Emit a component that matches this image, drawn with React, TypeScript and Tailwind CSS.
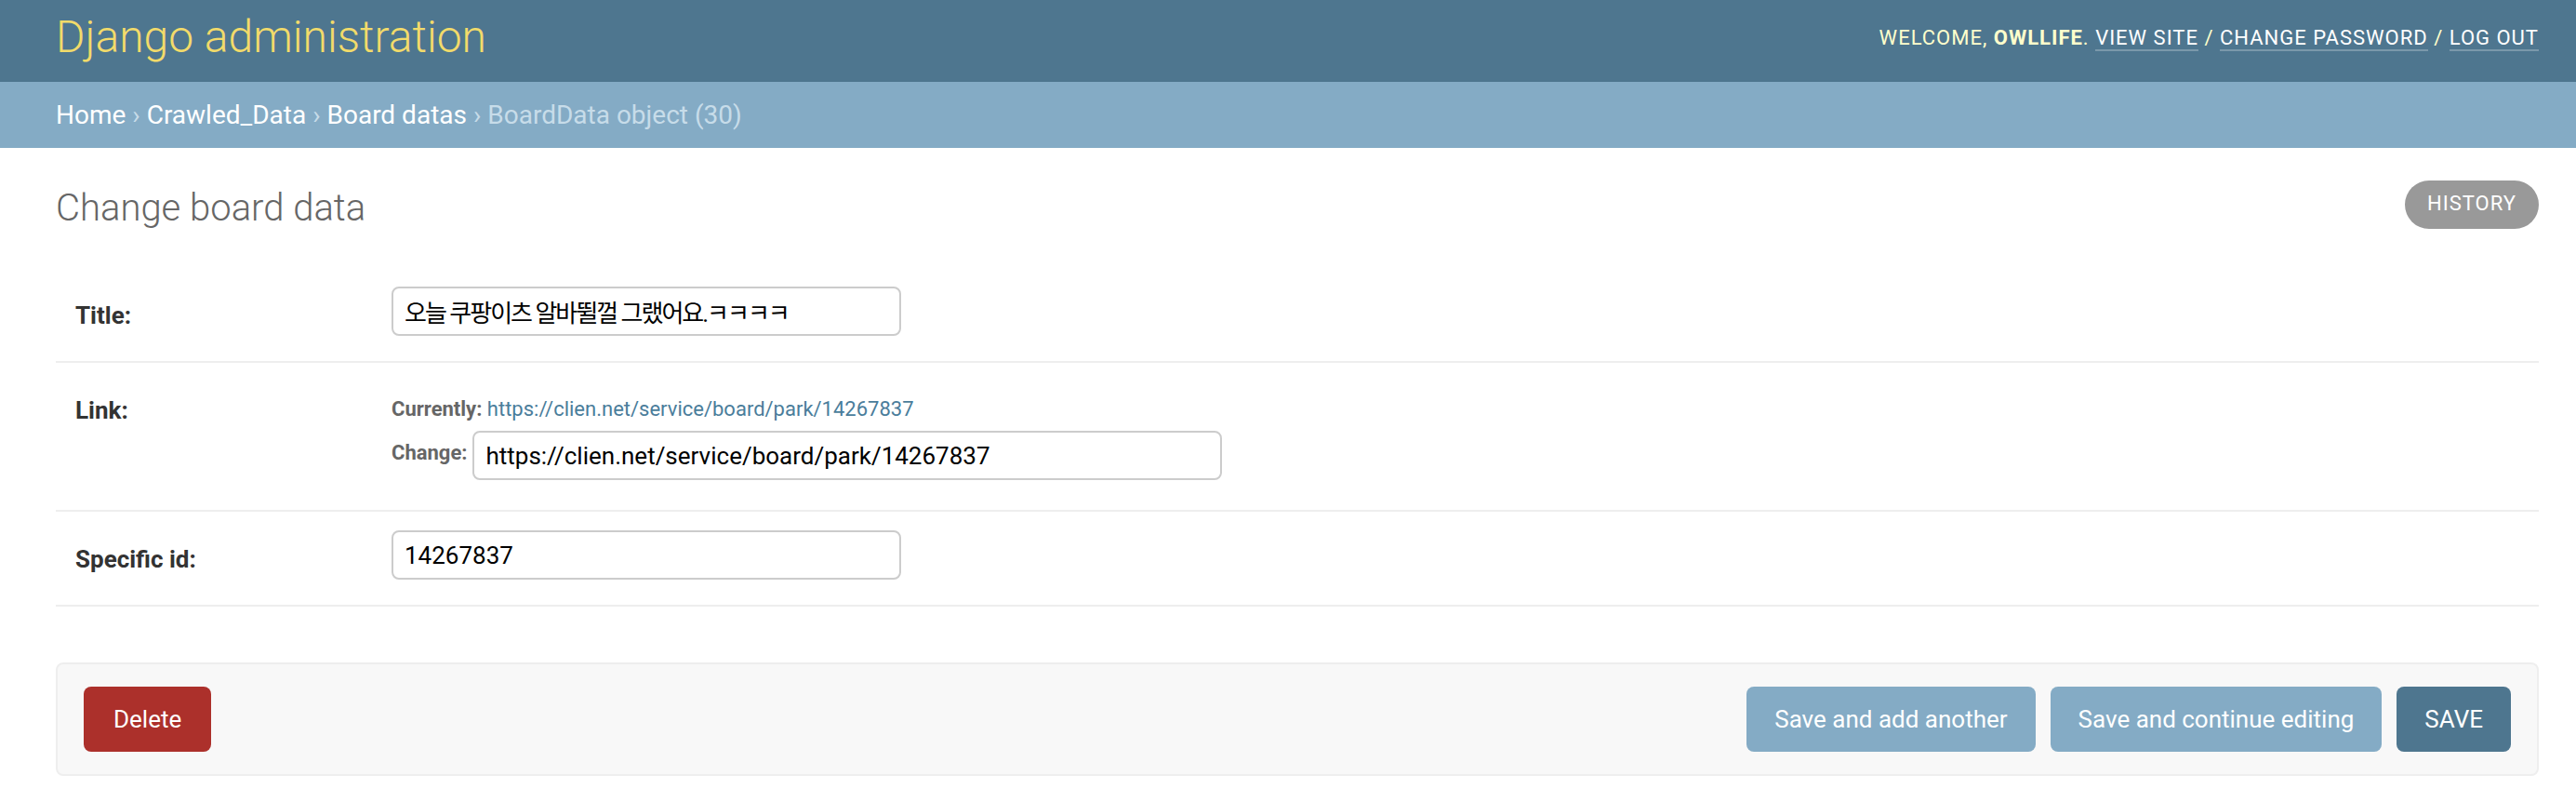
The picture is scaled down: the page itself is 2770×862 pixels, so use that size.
const font = "font-['Roboto','Noto_Sans_CJK_KR',sans-serif]";

function UserTools() {
  return (
    <div className="mb-[7px] text-[22px] uppercase tracking-[1px] text-[#ffffcc]">
      Welcome, <strong className="font-bold">owllife</strong>.{' '}
      <a href="#" className="border-b-2 border-white/25 text-white">View site</a> /{' '}
      <a href="#" className="border-b-2 border-white/25 text-white">Change password</a> /{' '}
      <a href="#" className="border-b-2 border-white/25 text-white">Log out</a>
    </div>
  );
}

function Breadcrumbs() {
  return (
    <div className="h-[71px] bg-[#84abc5] pl-[60px] pr-[40px] text-[28px] leading-[71px] text-[#c7dce9]">
      <a href="#" className="text-white">Home</a> ›{' '}
      <a href="#" className="text-white">Crawled_Data</a> ›{' '}
      <a href="#" className="text-white">Board datas</a> › BoardData object (30)
    </div>
  );
}

const inputCls =
  "h-[53px] rounded-[8px] border-2 border-[#cccccc] bg-white px-[12px] text-[26px] font-normal text-black outline-none font-['Roboto','Noto_Sans_CJK_KR',sans-serif]";

function FormRow({ label, children, pb = 'pb-[27px]' }: { label: string; children: React.ReactNode; pb?: string }) {
  return (
    <div className={`flex border-b-2 border-[#eeeeee] pl-[21px] pt-[20px] ${pb}`}>
      <label className="w-[340px] shrink-0 pt-[16px] text-[26px] font-bold leading-[30px] text-[#333]">{label}</label>
      {children}
    </div>
  );
}

export default function App() {
  return (
    <div className={`w-full bg-white ${font}`}>
      <header className="flex h-[88px] items-center justify-between bg-[#4e768f] pl-[60px] pr-[40px]">
        <h1 className="mb-[9px] text-[48px] font-light leading-none text-[#f2db6a]">Django administration</h1>
        <UserTools />
      </header>
      <Breadcrumbs />

      <main className="pl-[60px] pr-[40px] pt-[35px]">
        <div className="flex items-start justify-between">
          <h1 className="mt-[6px] text-[40px] font-light leading-[48px] text-[#666]">Change board data</h1>
          <a
            href="#"
            className="flex h-[52px] items-center rounded-full bg-[#999] px-[24px] pb-[3px] text-[22px] uppercase tracking-[1px] text-white"
          >
            History
          </a>
        </div>

        <form className="mt-[40px]">
          <FormRow label="Title:">
            <input
              className={`${inputCls} w-[548px] tracking-[-2px]`}
              defaultValue="오늘 쿠팡이츠 알바뛸껄 그랬어요.ㅋㅋㅋㅋ"
            />
          </FormRow>

          <FormRow label="Link:" pb="pb-[32px]">
            <div className="text-[22px] font-bold text-[#666]">
              <p className="pt-[10px] leading-[40px]">
                Currently:{' '}
                <a href="#" className="font-normal text-[#4a7d9b]">
                  https://clien.net/service/board/park/14267837
                </a>
              </p>
              <div className="mt-[3px] flex items-center gap-[6px]">
                <span className="mb-[6px]">Change:</span>
                <input className={`${inputCls} w-[806px]`} defaultValue="https://clien.net/service/board/park/14267837" />
              </div>
            </div>
          </FormRow>

          <FormRow label="Specific id:">
            <input className={`${inputCls} w-[548px]`} defaultValue="14267837" />
          </FormRow>

          <div className="mt-[60px] flex items-center justify-between rounded-[8px] border-2 border-[#eeeeee] bg-[#f8f8f8] px-[28px] py-[24px]">
            <a href="#" className="flex h-[70px] items-center rounded-[8px] bg-[#ac302b] px-[32px] text-[26px] text-white">
              Delete
            </a>
            <div className="flex gap-[16px]">
              <button type="button" className="h-[70px] rounded-[8px] bg-[#84abc5] px-[30px] text-[26px] text-white">
                Save and add another
              </button>
              <button type="button" className="h-[70px] rounded-[8px] bg-[#84abc5] px-[30px] text-[26px] text-white">
                Save and continue editing
              </button>
              <button type="button" className="h-[70px] rounded-[8px] bg-[#4e768f] px-[30px] text-[26px] uppercase text-white">
                Save
              </button>
            </div>
          </div>
        </form>
      </main>
    </div>
  );
}
